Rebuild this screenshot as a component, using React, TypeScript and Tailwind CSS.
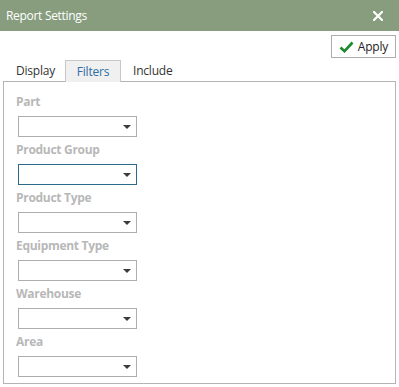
import { useState } from "react";

const fields = [
  "Part",
  "Product Group",
  "Product Type",
  "Equipment Type",
  "Warehouse",
  "Area",
];

const tabs = ["Display", "Filters", "Include"];

const Select = ({ focused }: { focused?: boolean }) => {
  return (
    <div
      className={`relative flex h-[21px] w-[119px] items-center justify-end border bg-white pr-[5px] ${
        focused ? "border-[#2b6a89]" : "border-[#adadad]"
      }`}
    >
      <span className="h-0 w-0 border-x-[4px] border-t-[4px] border-x-transparent border-t-[#3c3c3c]" />
    </div>
  );
};

const App = () => {
  const [active, setActive] = useState("Filters");

  return (
    <div
      className="h-[387px] w-[399px] bg-white text-[12px] text-[#333]"
      style={{ fontFamily: '"Open Sans", "Noto Sans", sans-serif' }}
    >
      <div className="flex h-[31px] items-center justify-between bg-[#879d7e] pl-[6px] pr-[16px]">
        <span className="text-[12px] tracking-[-0.3px] text-white">
          Report Settings
        </span>
        <svg width="10" height="10" viewBox="0 0 10 10">
          <path
            d="M1 1 L9 9 M9 1 L1 9"
            stroke="white"
            strokeWidth="2.2"
            strokeLinecap="square"
          />
        </svg>
      </div>

      <div className="flex justify-end pr-[3px] pt-[4px]">
        <button className="flex h-[23px] w-[65px] items-center justify-center gap-[4px] border border-[#adadad] bg-white text-[12px] tracking-[-0.2px] text-[#222]">
          <svg width="15" height="12" viewBox="0 0 15 12">
            <path
              d="M1.5 6.5 L5.5 10.2 L13.5 1.5"
              fill="none"
              stroke="#1e8a2e"
              strokeWidth="2.6"
            />
          </svg>
          Apply
        </button>
      </div>

      <div className="ml-[3px] mt-[1px] flex h-[22px] items-end">
        {tabs.map((t) => (
          <button
            key={t}
            onClick={() => setActive(t)}
            className={`relative -mb-px flex h-[22px] items-center text-[12px] tracking-[-0.2px] ${
              t === "Display" ? "w-[62px] pl-[13px]" : t === "Filters" ? "w-[56px] justify-center" : "w-[60px] pl-[12px]"
            } ${
              active === t
                ? "z-10 border border-b-0 border-[#c8c8c8] bg-[#f0f0f0] text-[#2e6ea6]"
                : "text-[#333]"
            }`}
          >
            {t}
          </button>
        ))}
      </div>

      <div className="mx-[3px] h-[303px] border border-[#b4b4b4] pl-[12px] pt-[12px]">
        {fields.map((f, i) => (
          <div key={f} className="mb-[5px]">
            <div className="mb-[6px] h-[16px] text-[12px] font-bold leading-[16px] tracking-[-0.3px] text-[#b8b8b8]">
              {f}
            </div>
            <div className="pl-[2px]">
              <Select focused={i === 1} />
            </div>
          </div>
        ))}
      </div>
    </div>
  );
};

export default App;
